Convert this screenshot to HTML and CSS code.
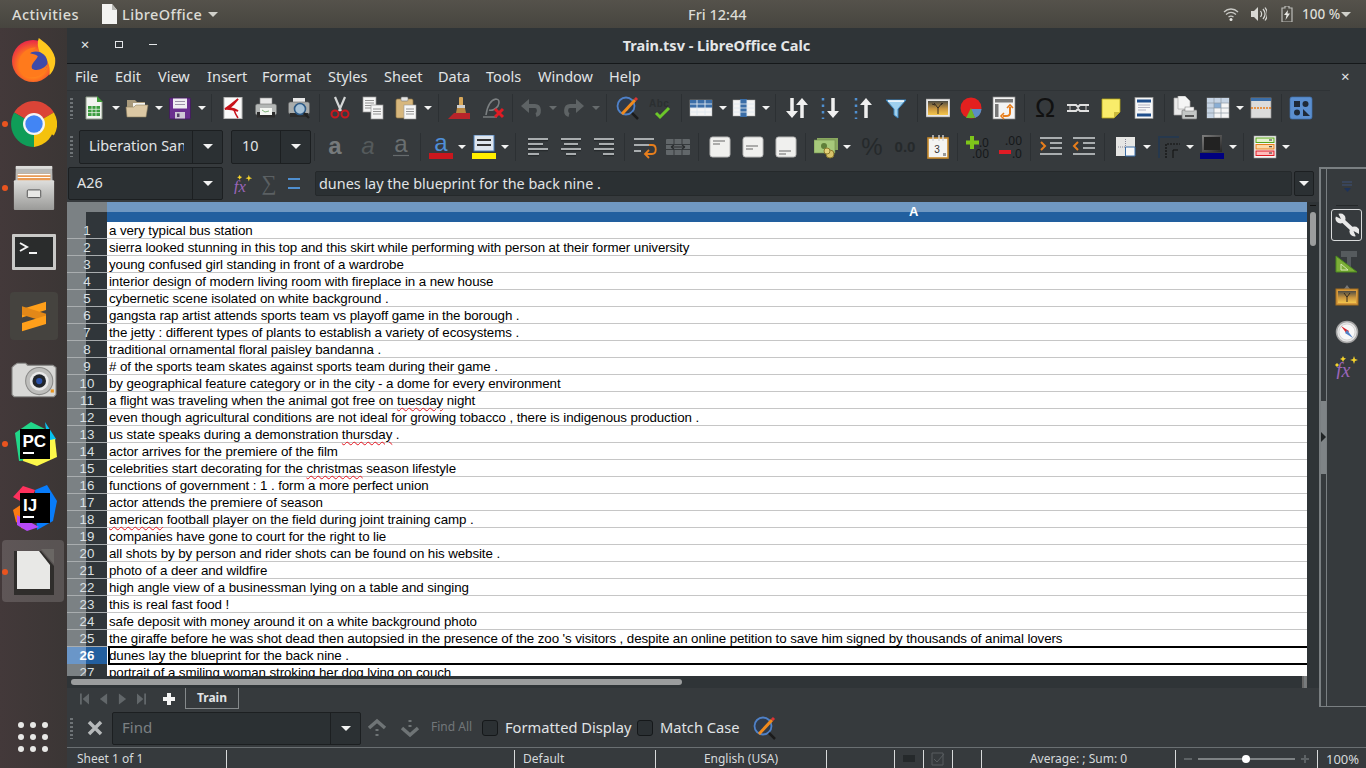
FILE: index.html
```html
<!DOCTYPE html>
<html lang="en">
<head>
<meta charset="utf-8">
<title>Train.tsv - LibreOffice Calc</title>
<link rel="stylesheet" href="styles.css">
</head>
<body>
<svg class="defs" aria-hidden="true">
  <symbol id="new" viewBox="0 0 24 24"><path d="M4 1h11l5 5v17H4z" fill="#f2f4f0" stroke="#8d9a88"/><path d="M15 0l6 6h-6z" fill="#3f9a3a"/><rect x="6" y="10" width="12" height="10" fill="#3b9c3f"/><path d="M6 13.3h12M6 16.6h12M10 10v10M14 10v10" stroke="#e8f4e6" stroke-width=".8"/></symbol>
  <symbol id="open" viewBox="0 0 24 24"><path d="M2 4h8l2 2h8v14H2z" fill="#a99a7c"/><rect x="8" y="7" width="12" height="6" fill="#f4f4f0"/><path d="M1 11h8l2-2h12l-2 12H2z" fill="#dcc8a4" stroke="#8f805f" stroke-width=".6"/></symbol>
  <symbol id="save" viewBox="0 0 24 24"><rect x="1.500" y="2" width="21" height="21" rx="1" fill="#6a2f8f" stroke="#43205c"/><rect x="5" y="2.500" width="14" height="10" fill="#f0eef2"/><path d="M7 5.500h10M7 8.500h10" stroke="#9c92a8"/><rect x="7" y="16" width="10" height="6.500" fill="#cfc8d6"/><rect x="9" y="17.500" width="2.500" height="3.500" fill="#55406a"/></symbol>
  <symbol id="pdf" viewBox="0 0 24 24"><rect x="3" y="1.500" width="18" height="21" fill="#fafafa" stroke="#b9b9b9"/><path d="M17 3C12 7 9 10 4 13c4-.500 8 .5 13 2-3-2-6-2.500-9-3 3-2 6-5 9-9z" fill="none" stroke="#c8121a" stroke-width="1.800"/><path d="M13 14c1 3 2 5 4 8" stroke="#c8121a" stroke-width="1.500" fill="none"/></symbol>
  <symbol id="print" viewBox="0 0 24 24"><rect x="6" y="2" width="12" height="7" fill="#e8e8e8" stroke="#888" stroke-width=".6"/><rect x="1.500" y="8" width="21" height="11" rx="2" fill="#b4b7b6" stroke="#6e7170" stroke-width=".6"/><rect x="3" y="16" width="18" height="5.500" fill="#2c2c2c"/><rect x="6" y="12" width="12" height="7" fill="#f4f6f2"/><path d="M8 14l3 2 4-1" stroke="#7fb27a" fill="none"/></symbol>
  <symbol id="preview" viewBox="0 0 24 24"><rect x="6" y="2" width="12" height="5" fill="#e8e8e8"/><rect x="1.500" y="6" width="21" height="12" rx="2" fill="#a9acab" stroke="#666" stroke-width=".6"/><rect x="3" y="17" width="18" height="4" fill="#2c2c2c"/><circle cx="13" cy="13" r="5.500" fill="#a8c3d8" stroke="#2d5a86" stroke-width="1.600"/><path d="M17 17l5 5" stroke="#222" stroke-width="2.200"/></symbol>
  <symbol id="cut" viewBox="0 0 24 24"><path d="M7 1l6 14M17 1l-6 14" stroke="#d4d6d6" stroke-width="2.200"/><circle cx="7" cy="18" r="3.500" fill="none" stroke="#c8181f" stroke-width="2"/><circle cx="17" cy="18" r="3.500" fill="none" stroke="#c8181f" stroke-width="2"/></symbol>
  <symbol id="copy" viewBox="0 0 24 24"><rect x="2" y="1" width="13" height="15" fill="#f5f5f5" stroke="#999" stroke-width=".7"/><path d="M4 4.500h9M4 7h9M4 9.500h9M4 12h6" stroke="#888" stroke-width=".9"/><rect x="10" y="9" width="12" height="14" fill="#f5f5f5" stroke="#999" stroke-width=".7"/><path d="M12 13h8M12 15.500h8M12 18h8" stroke="#888" stroke-width=".9"/></symbol>
  <symbol id="paste" viewBox="0 0 24 24"><rect x="2" y="3" width="17" height="19" rx="1.500" fill="#d7b77d" stroke="#8f7544" stroke-width=".7"/><rect x="7" y="1" width="7" height="4" rx="1" fill="#e4e4e4" stroke="#777" stroke-width=".6"/><rect x="10" y="9" width="12" height="14" fill="#f7f7f7" stroke="#999" stroke-width=".6"/><path d="M12 13h8M12 15.500h8M12 18h8" stroke="#888" stroke-width=".9"/></symbol>
  <symbol id="clone" viewBox="0 0 24 24"><rect x="11" y="1" width="4" height="9" rx="1" fill="#d8a85a"/><rect x="9" y="9" width="8" height="3" fill="#cfcfcf"/><path d="M9 12h8l1 5H8z" fill="#b8863f"/><path d="M0 23l6-6h16v6z" fill="#b8242a"/></symbol>
  <symbol id="clear" viewBox="0 0 24 24"><path d="M5 19C6 12 9 4 15 3c3 0 4 3 2 7-2 3-6 5-9 4" fill="none" stroke="#7c8082" stroke-width="1.600"/><path d="M2 21h14" stroke="#7c8082" stroke-width="1.400"/><path d="M14 13l8 8M22 13l-8 8" stroke="#e01b24" stroke-width="3"/></symbol>
  <symbol id="undo" viewBox="0 0 24 24"><path d="M5 10h11c5 0 5 8 1 9" fill="none" stroke="#5e6365" stroke-width="4"/><path d="M10 3L2 10l8 7z" fill="#5e6365"/></symbol>
  <symbol id="redo" viewBox="0 0 24 24"><path d="M19 10H8c-5 0-5 8-1 9" fill="none" stroke="#5e6365" stroke-width="4"/><path d="M14 3l8 7-8 7z" fill="#5e6365"/></symbol>
  <symbol id="spell" viewBox="0 0 24 24"><circle cx="10" cy="10" r="8.500" fill="#2f3a4a" stroke="#4f81c8" stroke-width="1.800"/><path d="M19 4L6 18" stroke="#f08a1c" stroke-width="3"/><path d="M19 4l2-2" stroke="#d33" stroke-width="3"/><path d="M16 17l6 6" stroke="#1b1b1b" stroke-width="2.500"/></symbol>
  <symbol id="auto" viewBox="0 0 24 24"><text x="0" y="11" class="ab">Abc</text><path d="M7 17l4 4 9-9" fill="none" stroke="#6cc62a" stroke-width="3"/></symbol>
  <symbol id="rows" viewBox="0 0 24 24"><rect x="1" y="4" width="22" height="16" fill="#f4f4f4" stroke="#aaa" stroke-width=".5"/><rect x="1" y="4" width="22" height="8" fill="#3b6ea8"/><path d="M1 8h22M1 12h22M1 16h22M8 4v16M16 4v16" stroke="#dfe6ee" stroke-width=".9"/></symbol>
  <symbol id="cols" viewBox="0 0 24 24"><rect x="1" y="4" width="22" height="16" fill="#f4f4f4" stroke="#aaa" stroke-width=".5"/><rect x="8" y="3" width="7" height="18" fill="#3b6ea8"/><path d="M1 8h22M1 12h22M1 16h22M8 4v16M15 4v16" stroke="#dfe6ee" stroke-width=".9"/></symbol>
  <symbol id="sort" viewBox="0 0 24 24"><path d="M7 2v15M17 22V7" stroke="#f0f0f0" stroke-width="3.500"/><path d="M1 15h12l-6 7zM11 9h12l-6-7z" fill="#f0f0f0"/></symbol>
  <symbol id="asc" viewBox="0 0 24 24"><path d="M15 2v15" stroke="#f0f0f0" stroke-width="3.500"/><path d="M9 15h12l-6 7z" fill="#f0f0f0"/><path d="M5 2v21" stroke="#4f8fd0" stroke-width="2.500" stroke-dasharray="2.500 4"/></symbol>
  <symbol id="desc" viewBox="0 0 24 24"><path d="M15 22V7" stroke="#f0f0f0" stroke-width="3.500"/><path d="M9 9h12l-6-7z" fill="#f0f0f0"/><path d="M5 2v21" stroke="#4f8fd0" stroke-width="2.500" stroke-dasharray="2.500 4"/></symbol>
  <symbol id="filter" viewBox="0 0 24 24"><path d="M2 4h20l-8 9v9l-4-3v-6z" fill="#9fd0ee" stroke="#3a85c0" stroke-width="1"/><path d="M4 5h16" stroke="#fff" stroke-width="1.500"/></symbol>
  <symbol id="image" viewBox="0 0 24 24"><defs><linearGradient id="sun" x1="0" y1="0" x2="0" y2="1"><stop offset="0" stop-color="#4b4a44"/><stop offset=".55" stop-color="#c8953f"/><stop offset="1" stop-color="#f4c64c"/></linearGradient></defs><rect x="0" y="3" width="24" height="18" fill="#e8e8e8" stroke="#888" stroke-width=".6"/><rect x="2" y="5" width="20" height="14" fill="url(#sun)"/><path d="M12 18v-6l-4-5M12 12l4-5M9 9l-3-1M15 9l2-2" stroke="#33291f" stroke-width="1" fill="none"/></symbol>
  <symbol id="chart" viewBox="0 0 24 24"><circle cx="12" cy="12" r="10.500" fill="#e3201f"/><path d="M12 13h10.500A10.500 10.500 0 0 1 16 22z" fill="#5b8cc4"/><path d="M12 12l-5 10h9z" fill="#6db62a"/></symbol>
  <symbol id="pivot" viewBox="0 0 24 24"><rect x="1" y="1" width="22" height="22" fill="#f4f4f4" stroke="#888" stroke-width=".7"/><rect x="3" y="3" width="18" height="3.500" fill="#777"/><rect x="3" y="8" width="3.500" height="13" fill="#777"/><path d="M18 11v6c0 2-2 3-4 3h-3" fill="none" stroke="#e87e1c" stroke-width="2"/><path d="M15 12l3-3 3 3M12 17l-3 3 3 3" fill="none" stroke="#e87e1c" stroke-width="1.600"/></symbol>
  <symbol id="omega" viewBox="0 0 24 24"><text x="12" y="21" class="om">Ω</text></symbol>
  <symbol id="link" viewBox="0 0 24 24"><path d="M1 9h9l2 2 2-2h9M1 15h9l2-2 2 2h9" fill="none" stroke="#e0e0e0" stroke-width="2"/><path d="M4 10v4M20 10v4" stroke="#999" stroke-width="1.500"/></symbol>
  <symbol id="note" viewBox="0 0 24 24"><path d="M3 3h18v13l-6 6H3z" fill="#f9ec6a" stroke="#b4a417" stroke-width=".8"/><path d="M15 22v-6h6z" fill="#cbbb3b"/></symbol>
  <symbol id="hdr" viewBox="0 0 24 24"><rect x="3" y="1.500" width="18" height="21" fill="#f7f7f7" stroke="#999" stroke-width=".7"/><rect x="5" y="3.500" width="14" height="3" fill="#1f4e8c"/><rect x="5" y="17.500" width="14" height="3" fill="#1f4e8c"/><path d="M6 9h12M6 11.500h12M6 14h8" stroke="#aab" stroke-width=".9"/></symbol>
  <symbol id="area" viewBox="0 0 24 24"><path d="M1 2h10l5 4v13H1z" fill="#eaeaea" stroke="#aaa" stroke-width=".7"/><path d="M5 0h7l5 5v8H5z" fill="#f4f4f4" stroke="#aaa" stroke-width=".7"/><rect x="9" y="14" width="15" height="9" rx="1" fill="#c4c7c6" stroke="#777" stroke-width=".7"/><rect x="12" y="11" width="9" height="4" fill="#f4f4f4" stroke="#777" stroke-width=".5"/><rect x="12" y="19" width="9" height="2" fill="#555"/></symbol>
  <symbol id="freeze" viewBox="0 0 24 24"><rect x="1" y="2" width="22" height="20" fill="#f5f5f5" stroke="#999" stroke-width=".6"/><rect x="1" y="2" width="22" height="5" fill="#c6d4e4"/><rect x="1" y="2" width="7" height="20" fill="#c6d4e4"/><rect x="8" y="7" width="7" height="5" fill="#8aaed4"/><path d="M1 7h22M1 12h22M1 17h22M8 2v20M15 2v20" stroke="#8d99a5" stroke-width=".7"/></symbol>
  <symbol id="split" viewBox="0 0 24 24"><rect x="2" y="2" width="20" height="20" fill="#dcdcdc" stroke="#999" stroke-width=".7"/><rect x="2" y="2" width="20" height="3" fill="#3b6ea8"/><path d="M2 12h20" stroke="#e87e1c" stroke-width="1.300" stroke-dasharray="2 1"/></symbol>
  <symbol id="nav" viewBox="0 0 24 24"><rect x="1" y="1" width="22" height="22" rx="2" fill="#5b8fd0" stroke="#3f70ad" stroke-width=".7"/><rect x="5" y="5" width="6" height="6" fill="#1f2a38"/><circle cx="16.500" cy="8" r="3" fill="#1f2a38"/><circle cx="8" cy="16.500" r="3" fill="#1f2a38"/><path d="M14 13v7h7z" fill="#1f2a38"/></symbol>

  <symbol id="abold" viewBox="0 0 24 24"><text x="12" y="19" class="fa fb">a</text></symbol>
  <symbol id="aital" viewBox="0 0 24 24"><text x="12" y="19" class="fa fit">a</text></symbol>
  <symbol id="aund" viewBox="0 0 24 24"><text x="12" y="17" class="fa">a</text><path d="M4 20.500h16" stroke="#666b6d" stroke-width="1.200"/></symbol>
  <symbol id="fcol" viewBox="0 0 24 24"><text x="12" y="16" class="fa fbl">a</text><rect x="0" y="18" width="24" height="6" fill="#c9171e"/></symbol>
  <symbol id="hl" viewBox="0 0 24 24"><rect x="2" y="0" width="20" height="16" fill="#dfe6ee" stroke="#4a7fbc"/><path d="M5 5h14M5 10h14" stroke="#333" stroke-width="2.200"/><rect x="0" y="18" width="24" height="6" fill="#ffee00"/></symbol>
  <symbol id="al" viewBox="0 0 24 24"><path d="M2 4h20M2 9h15M2 14h20M2 19h11" stroke="#a9adaf" stroke-width="2"/><path d="M2 5h20M2 10h15M2 15h20M2 20h11" stroke="#1d2022" stroke-width=".7" transform="translate(0 .700)"/></symbol>
  <symbol id="ac" viewBox="0 0 24 24"><path d="M2 4h20M5 9h14M2 14h20M7 19h10" stroke="#a9adaf" stroke-width="2"/><path d="M2 5h20M5 10h14M2 15h20M7 20h10" stroke="#1d2022" stroke-width=".7" transform="translate(0 .700)"/></symbol>
  <symbol id="ar" viewBox="0 0 24 24"><path d="M2 4h20M7 9h15M2 14h20M11 19h11" stroke="#a9adaf" stroke-width="2"/><path d="M2 5h20M7 10h15M2 15h20M11 20h11" stroke="#1d2022" stroke-width=".7" transform="translate(0 .700)"/></symbol>
  <symbol id="wrap" viewBox="0 0 24 24"><path d="M1 4h20M1 10h15M1 16h7" stroke="#a9adaf" stroke-width="2"/><path d="M16 10h3c5 0 5 9 0 9h-6" fill="none" stroke="#e87e1c" stroke-width="1.800"/><path d="M16 15l-4 4 4 4" fill="none" stroke="#e87e1c" stroke-width="1.800"/></symbol>
  <symbol id="merge" viewBox="0 0 24 24"><rect x="0" y="4" width="24" height="16" rx="1" fill="#62676a"/><path d="M0 9.500h24M0 14.500h24M8 4v5M16 4v5M8 15v5M16 15v5" stroke="#363a3d"/><path d="M5 12h14M5 12l3-2M5 12l3 2M19 12l-3-2M19 12l-3 2" stroke="#2a2d2f" stroke-width="1.200"/></symbol>
  <symbol id="vt" viewBox="0 0 24 24"><rect x="2" y="2" width="20" height="20" rx="2.500" fill="#f0f0ee" stroke="#b8b8b8"/><path d="M5 6h12M5 9h7" stroke="#666" stroke-width="1.200"/></symbol>
  <symbol id="vm" viewBox="0 0 24 24"><rect x="2" y="2" width="20" height="20" rx="2.500" fill="#f0f0ee" stroke="#b8b8b8"/><path d="M5 11h12M5 14h7" stroke="#666" stroke-width="1.200"/></symbol>
  <symbol id="vb" viewBox="0 0 24 24"><rect x="2" y="2" width="20" height="20" rx="2.500" fill="#f0f0ee" stroke="#b8b8b8"/><path d="M5 16h12M5 19h7" stroke="#666" stroke-width="1.200"/></symbol>
  <symbol id="cash" viewBox="0 0 24 24"><rect x="3" y="3" width="21" height="12" fill="#8aa860"/><rect x="0" y="5" width="21" height="13" fill="#a7c97b" stroke="#6e8a4a" stroke-width=".6"/><circle cx="10" cy="11" r="3" fill="#5f7f3a"/><circle cx="16" cy="19" r="4" fill="#d8c36a" stroke="#8c7a2e"/><circle cx="13" cy="16" r="3" fill="#e5d27a" stroke="#8c7a2e"/></symbol>
  <symbol id="pct" viewBox="0 0 24 24"><text x="12" y="20" class="pc">%</text></symbol>
  <symbol id="dec" viewBox="0 0 24 24"><text x="12" y="17" class="pc2">0.0</text></symbol>
  <symbol id="date" viewBox="0 0 24 24"><rect x="2" y="3" width="20" height="20" fill="#f4f4f2" stroke="#c78a2c" stroke-width="1.600"/><path d="M7 0v6M13 0v6M17 0v6" stroke="#d8d8d8" stroke-width="1.400"/><text x="11" y="18" class="cal">3</text><rect x="17" y="18" width="3" height="3" fill="#999"/></symbol>
  <symbol id="adddec" viewBox="0 0 24 24"><path d="M7 1v13M1 7.500h13" stroke="#7ec51a" stroke-width="4"/><text x="24" y="12" class="nm">.0</text><text x="24" y="23" class="nm">.00</text></symbol>
  <symbol id="remdec" viewBox="0 0 24 24"><rect x="1" y="15" width="12" height="4" fill="#e01b24"/><text x="24" y="10" class="nm">.00</text><text x="24" y="23" class="nm">.0</text></symbol>
  <symbol id="ind" viewBox="0 0 24 24"><path d="M1 3h22M11 8h12M11 13h12M1 19h22" stroke="#a9adaf" stroke-width="1.800"/><path d="M2 7l4 4-4 4" fill="none" stroke="#e87e1c" stroke-width="2"/></symbol>
  <symbol id="outd" viewBox="0 0 24 24"><path d="M1 3h22M11 8h12M11 13h12M1 19h22" stroke="#a9adaf" stroke-width="1.800"/><path d="M6 7l-4 4 4 4" fill="none" stroke="#e87e1c" stroke-width="2"/></symbol>
  <symbol id="bord" viewBox="0 0 24 24"><rect x="2" y="2" width="19" height="19" fill="#e6e6e4"/><path d="M11.500 12H21v9h-9.500z" fill="#f8f8f8" stroke="#3b6ea8" stroke-width="1"/><path d="M11.500 4v8M4 12h8" stroke="#889" stroke-dasharray="1 1"/></symbol>
  <symbol id="bstyle" viewBox="0 0 24 24"><path d="M2 23V2h20" fill="none" stroke="#26384d" stroke-width="2"/><path d="M9 23V9h14" fill="none" stroke="#111" stroke-width="1.200" stroke-dasharray="2 1"/><path d="M16 23v-8h5" fill="none" stroke="#111" stroke-width="1"/></symbol>
  <symbol id="bcol" viewBox="0 0 24 24"><defs><linearGradient id="bc" x1="0" y1="0" x2="1" y2="1"><stop offset="0" stop-color="#7a7a7a"/><stop offset="1" stop-color="#2a2a2a"/></linearGradient></defs><rect x="3" y="1" width="18" height="15" fill="#222" stroke="url(#bc)" stroke-width="2"/><rect x="0" y="18" width="24" height="6" fill="#00007f"/></symbol>
  <symbol id="cond" viewBox="0 0 24 24"><rect x="1" y="1" width="22" height="22" fill="#f6f6f6" stroke="#999" stroke-width=".6"/><rect x="3" y="3" width="18" height="4.500" fill="#e4f2cf" stroke="#5aa51c"/><rect x="3" y="9.500" width="18" height="4.500" fill="#fbd9a8" stroke="#e87e1c"/><rect x="3" y="16" width="18" height="4.500" fill="#fbb" stroke="#e01b24"/><path d="M16 5h3M16 11.700h3M16 18h3" stroke="#333"/></symbol>

  <symbol id="wrench" viewBox="0 0 24 24"><path d="M6 6l13 12" stroke="#e8e8e8" stroke-width="4"/><circle cx="5.500" cy="5.500" r="5" fill="#e8e8e8"/><circle cx="19.500" cy="18.500" r="5" fill="#e8e8e8"/><path d="M6 6L3 0h-3v3zM18.500 18L21 24h3v-3z" fill="#363a3d"/></symbol>
  <symbol id="styl" viewBox="0 0 24 24"><path d="M6 1h16v6H16v12h-4V7H6z" fill="#565b5e"/><path d="M1 6l21 16H1z" fill="#7dae38" stroke="#4a8a1c"/><path d="M6 14l7 6H6z" fill="none" stroke="#d4e6b0"/></symbol>
  <symbol id="gal" viewBox="0 0 24 24"><path d="M12 0l3 4H9z" fill="#777"/><rect x="1" y="4" width="22" height="16" fill="#d69a3e" stroke="#a66f1d"/><rect x="3" y="6" width="18" height="12" fill="url(#sun)"/><path d="M12 17v-5l-3-4M12 12l3-4" stroke="#33291f" fill="none"/></symbol>
  <symbol id="comp" viewBox="0 0 24 24"><circle cx="12" cy="12" r="10.500" fill="#e4e4e4" stroke="#a4a4a4" stroke-width="1.500"/><circle cx="12" cy="12" r="8" fill="#f8f8f8" stroke="#bbb" stroke-width=".5"/><path d="M6 6l8 5-2 3z" fill="#d8272e"/><path d="M18 18l-8-5 2-3z" fill="#4f81c8"/></symbol>
  <symbol id="fx" viewBox="0 0 24 24"><text x="1" y="22" class="fxt">fx</text><path d="M8 1l1 2 2 .500-2 1.500-1 2-1-2-2-1 2-1zM19 1l1 3 3 1-3 1-1 3-1-3-3-1 3-1zM2 8l1 1 1 1-1 1-1 1-1-1-1-1 1-1z" fill="#f4d22c"/></symbol>
  <symbol id="sfx" viewBox="0 0 24 24"><text x="1" y="22" class="fxt">fx</text><path d="M8 1l1 2 2 .500-2 1.500-1 2-1-2-2-1 2-1zM19 1l1 3 3 1-3 1-1 3-1-3-3-1 3-1z" fill="#f4d22c"/></symbol>
</svg>

<header class="topbar">
  <span class="activities">Activities</span>
  <span class="appmenu">
    <svg class="tdoc" viewBox="0 0 17 20"><path d="M1 0h10l5 6v14H1z" fill="#f3f3f1"/><path d="M11 0l5 6h-5z" fill="#b7b7b3"/></svg>
    <span class="appname">LibreOffice</span><i class="caret"></i>
  </span>
  <span class="clock">Fri 12:44</span>
  <span class="tray">
    <svg class="wifi" viewBox="0 0 16 14"><path d="M1 5c4-4 10-4 14 0M3 7.500c3-2.500 7-2.500 10 0M5.500 10c1.500-1 3.500-1 5 0" fill="none" stroke="#c9c9c5" stroke-width="1.300"/><circle cx="8" cy="12.500" r="1.500" fill="#e6e6e2"/></svg>
    <svg class="vol" viewBox="0 0 16 14"><path d="M0 4h3l4-4v14l-4-4H0z" fill="#d8d8d4"/><path d="M9.500 4c1.500 2 1.500 4 0 6M12 2c2.500 3 2.500 7 0 10M14 .5c3 4 3 9 0 13" fill="none" stroke="#d8d8d4" stroke-width="1.200"/></svg>
    <svg class="batt" viewBox="0 0 12 16"><path d="M4 0h4v2h3v14H1V2h3z" fill="none" stroke="#bdbdb9" stroke-width="1.200"/><path d="M7 4L3 9h2.500L4.500 14 9 7.500H6.500z" fill="#e6e6e2"/></svg>
    <span class="pct">100 %</span><i class="caret"></i>
  </span>
</header>

<div class="desktop">
  <nav class="dock">
    <div class="dk"><svg class="dki" viewBox="0 0 48 48"><defs><radialGradient id="ffx" cx=".5" cy=".6" r=".6"><stop offset="0" stop-color="#ffd23c"/><stop offset=".55" stop-color="#ff7a1c"/><stop offset="1" stop-color="#e8264a"/></radialGradient></defs><circle cx="23" cy="25" r="22" fill="url(#ffx)"/><path d="M29 1c5 4 14 9 17 21 1 8-2 14-6 18 2-10-3-19-10-24-2-5-3-10-1-15z" fill="#ffc81e"/><circle cx="26" cy="27" r="12" fill="#3f4aa8"/><path d="M10 20c4-6 10-10 16-9-2 3-6 3-6 6 2 1 6 1 8 3-2 5-8 8-6 13 4 3 12 1 16-5-1 9-8 15-17 14C11 42 5 31 10 20z" fill="#ff7a1c"/></svg></div>
    <div class="dk run"><svg class="dki" viewBox="0 0 44 44"><path d="M22 22L3 11a22 22 0 0 1 38 0z" fill="#db4437"/><path d="M22 22L3 11a22 22 0 0 0 19 33z" fill="#0f9d58"/><path d="M22 22h19.500A22 22 0 0 1 22 44z" fill="#f4c20d"/><path d="M22 22L41 11a22 22 0 0 1 0 22z" fill="#f4c20d"/><circle cx="22" cy="22" r="10.500" fill="#f5f5f5"/><circle cx="22" cy="22" r="8.300" fill="#4285f4"/></svg></div>
    <div class="dk run"><svg class="dki" viewBox="0 0 44 48"><defs><linearGradient id="drw" x1="0" y1="0" x2="0" y2="1"><stop offset="0" stop-color="#dededc"/><stop offset="1" stop-color="#9a9a98"/></linearGradient></defs><path d="M3 2h38l1 44H2z" fill="#b9b9b7"/><rect x="3" y="1" width="38" height="3" fill="#dcdcda"/><path d="M5 9h34v8H5z" fill="#e99a55"/><path d="M5 10h34M5 13h34" stroke="#fff" stroke-width="1.200"/><rect x="1" y="16" width="42" height="31" rx="1" fill="url(#drw)"/><rect x="15" y="26" width="14" height="8" rx="1" fill="#e8e8e6" stroke="#505050"/></svg></div>
    <div class="dk"><svg class="dki" viewBox="0 0 46 38"><rect x="1" y="1" width="44" height="36" rx="1" fill="#c9c9c7"/><rect x="4" y="4" width="38" height="30" fill="#2a2c2c"/><path d="M9 10l7 4-7 4" fill="none" stroke="#f4f4f4" stroke-width="2"/><path d="M18 20h8" stroke="#f4f4f4" stroke-width="2"/></svg></div>
    <div class="dk"><div class="subl"><svg class="sub" viewBox="0 0 26 32"><path d="M26 0v9L0 17V8z" fill="#ff9f1a"/><path d="M0 14l26 8V13L0 5z" fill="#e38818"/><path d="M26 15v9L0 32v-9z" fill="#ff9f1a"/></svg></div></div>
    <div class="dk"><svg class="dki" viewBox="0 0 44 34"><path d="M3 3l3-2h8l2 2h24l3 2v26l-2 2H3l-2-2V5z" fill="#d8d8d6" stroke="#8c8c8a"/><circle cx="27" cy="18" r="13" fill="#bdbdbb" stroke="#8a8a88"/><circle cx="27" cy="18" r="9" fill="#eaeaea"/><circle cx="27" cy="18" r="6.500" fill="#22262c"/><circle cx="27" cy="18" r="3" fill="#2a50a8"/><rect x="38" y="26" width="3" height="3" fill="#e8941c"/></svg></div>
    <div class="dk run"><svg class="dki" viewBox="0 0 46 46"><path d="M4 12L20 1l14 7-8 30-18 2z" fill="#21d789"/><path d="M34 1l11 17-8 6z" fill="#07c3f2"/><path d="M14 24l30-6 2 18-20 9-14-5z" fill="#fcf84a"/><rect x="9" y="8" width="30" height="30" fill="#000"/><text x="11.500" y="26" class="jb">PC</text><rect x="12" y="31" width="11" height="2" fill="#fff"/></svg></div>
    <div class="dk"><svg class="dki" viewBox="0 0 46 46"><path d="M2 12L12 1l12 4-6 16z" fill="#fe315d"/><path d="M24 5L36 0l10 16-4 20-16 9z" fill="#087cfa"/><path d="M2 25l9-6-1 24 8 2-13-8z" fill="#f97a12"/><path d="M6 30l22 12-12 4-10-6z" fill="#b74af7"/><rect x="9" y="8" width="30" height="30" fill="#000"/><text x="12" y="26" class="jb">IJ</text><rect x="12" y="31" width="11" height="2" fill="#fff"/></svg></div>
    <div class="dk run active"><svg class="dki lo" viewBox="0 0 40 46"><path d="M0 2h27l13 15v29H0z" fill="#2f2d2b"/><path d="M3 2h22l11 14v24H3z" fill="#e8e8e6"/><path d="M27 0h13v15z" fill="#6a6764"/></svg></div>
    <div class="apps"><i></i><i></i><i></i><i></i><i></i><i></i><i></i><i></i><i></i></div>
  </nav>

  <main class="win">
    <div class="title">
      <span class="wb">×</span><span class="wb"><i class="sq"></i></span><span class="wb"><i class="mn"></i></span>
      <span class="ttext">Train.tsv - LibreOffice Calc</span>
    </div>
    <div class="menu">
      <span>File</span><span>Edit</span><span>View</span><span>Insert</span><span>Format</span><span>Styles</span><span>Sheet</span><span>Data</span><span>Tools</span><span>Window</span><span>Help</span>
      <b class="mclose">×</b>
    </div>

    <div class="tb tb1">
      <i class="grip"></i>
      <span class="t"><svg><use href="#new"/></svg></span><i class="d"></i>
      <span class="t"><svg><use href="#open"/></svg></span><i class="d"></i>
      <span class="t"><svg><use href="#save"/></svg></span><i class="d"></i><i class="sp s10"></i>
      <span class="t"><svg><use href="#pdf"/></svg></span>
      <span class="t"><svg><use href="#print"/></svg></span>
      <span class="t"><svg><use href="#preview"/></svg></span><i class="sp s8"></i>
      <span class="t"><svg><use href="#cut"/></svg></span>
      <span class="t"><svg><use href="#copy"/></svg></span>
      <span class="t"><svg><use href="#paste"/></svg></span><i class="d"></i><i class="sp s11"></i>
      <span class="t"><svg><use href="#clone"/></svg></span>
      <span class="t"><svg><use href="#clear"/></svg></span><i class="sp s5"></i>
      <span class="t"><svg><use href="#undo"/></svg></span><i class="d off"></i>
      <span class="t"><svg><use href="#redo"/></svg></span><i class="d off"></i><i class="sp s11"></i>
      <span class="t"><svg><use href="#spell"/></svg></span>
      <span class="t"><svg><use href="#auto"/></svg></span><i class="sp s7"></i>
      <span class="t"><svg><use href="#rows"/></svg></span><i class="d"></i>
      <span class="t"><svg><use href="#cols"/></svg></span><i class="d"></i><i class="sp s10"></i>
      <span class="t"><svg><use href="#sort"/></svg></span>
      <span class="t"><svg><use href="#asc"/></svg></span>
      <span class="t"><svg><use href="#desc"/></svg></span>
      <span class="t"><svg><use href="#filter"/></svg></span><i class="sp s9"></i>
      <span class="t"><svg><use href="#image"/></svg></span>
      <span class="t"><svg><use href="#chart"/></svg></span>
      <span class="t"><svg><use href="#pivot"/></svg></span><i class="sp s8"></i>
      <span class="t"><svg><use href="#omega"/></svg></span>
      <span class="t"><svg><use href="#link"/></svg></span>
      <span class="t"><svg><use href="#note"/></svg></span>
      <span class="t"><svg><use href="#hdr"/></svg></span><i class="sp s8"></i>
      <span class="t"><svg><use href="#area"/></svg></span>
      <span class="t"><svg><use href="#freeze"/></svg></span><i class="d"></i>
      <span class="t"><svg><use href="#split"/></svg></span><i class="sp s7"></i>
      <span class="t"><svg><use href="#nav"/></svg></span>
    </div>

    <div class="tb tb2">
      <i class="grip"></i>
      <div class="combo fontbox"><span class="cv">Liberation Sans</span><span class="cb"><i class="d"></i></span></div>
      <div class="combo sizebox"><span class="cv">10</span><span class="cb"><i class="d"></i></span></div>
      <i class="sp s7"></i>
      <span class="t"><svg><use href="#abold"/></svg></span>
      <span class="t"><svg><use href="#aital"/></svg></span>
      <span class="t"><svg><use href="#aund"/></svg></span><i class="sp s7"></i>
      <span class="t"><svg><use href="#fcol"/></svg></span><i class="d"></i>
      <span class="t"><svg><use href="#hl"/></svg></span><i class="d"></i><i class="sp s11"></i>
      <span class="t"><svg><use href="#al"/></svg></span>
      <span class="t"><svg><use href="#ac"/></svg></span>
      <span class="t"><svg><use href="#ar"/></svg></span><i class="sp s8"></i>
      <span class="t"><svg><use href="#wrap"/></svg></span>
      <span class="t"><svg><use href="#merge"/></svg></span><i class="sp s9"></i>
      <span class="t"><svg><use href="#vt"/></svg></span>
      <span class="t"><svg><use href="#vm"/></svg></span>
      <span class="t"><svg><use href="#vb"/></svg></span><i class="sp s7"></i>
      <span class="t"><svg><use href="#cash"/></svg></span><i class="d"></i><i class="gap3"></i>
      <span class="t"><svg><use href="#pct"/></svg></span>
      <span class="t"><svg><use href="#dec"/></svg></span>
      <span class="t"><svg><use href="#date"/></svg></span><i class="sp s6"></i>
      <span class="t"><svg><use href="#adddec"/></svg></span>
      <span class="t"><svg><use href="#remdec"/></svg></span><i class="sp s8"></i>
      <span class="t"><svg><use href="#ind"/></svg></span>
      <span class="t"><svg><use href="#outd"/></svg></span><i class="sp s9"></i>
      <span class="t"><svg><use href="#bord"/></svg></span><i class="d"></i>
      <span class="t"><svg><use href="#bstyle"/></svg></span><i class="d"></i>
      <span class="t"><svg><use href="#bcol"/></svg></span><i class="d"></i><i class="sp s10"></i>
      <span class="t"><svg><use href="#cond"/></svg></span><i class="d"></i>
    </div>

    <div class="work">
      <div class="sheetcol">
        <div class="fbar">
          <div class="combo namebox"><span class="cv">A26</span><span class="cb"><i class="d"></i></span></div>
          <span class="fi fi1"><svg><use href="#sfx"/></svg></span>
          <span class="fi sigma">∑</span>
          <span class="fi eq"></span>
          <div class="finput">dunes lay the blueprint for the back nine .</div>
          <span class="fdrop"><i class="d"></i></span>
        </div>
        <div class="gridwrap">
          <div class="grid">
            <div class="hdr"><div class="corner"></div><div class="colA">A</div></div>
            <div class="row"><b>1</b><p>a very typical bus station</p></div>
            <div class="row"><b>2</b><p>sierra looked stunning in this top and this skirt while performing with person at their former university</p></div>
            <div class="row"><b>3</b><p>young confused girl standing in front of a wardrobe</p></div>
            <div class="row"><b>4</b><p>interior design of modern living room with fireplace in a new house</p></div>
            <div class="row"><b>5</b><p>cybernetic scene isolated on white background .</p></div>
            <div class="row"><b>6</b><p>gangsta rap artist attends sports team vs playoff game in the borough .</p></div>
            <div class="row"><b>7</b><p>the jetty : different types of plants to establish a variety of ecosystems .</p></div>
            <div class="row"><b>8</b><p>traditional ornamental floral paisley bandanna .</p></div>
            <div class="row"><b>9</b><p># of the sports team skates against sports team during their game .</p></div>
            <div class="row"><b>10</b><p>by geographical feature category or in the city - a dome for every environment</p></div>
            <div class="row"><b>11</b><p>a flight was traveling when the animal got free on <u>tuesday</u> night</p></div>
            <div class="row"><b>12</b><p>even though agricultural conditions are not ideal for growing tobacco , there is indigenous production .</p></div>
            <div class="row"><b>13</b><p>us state speaks during a demonstration <u>thursday</u> .</p></div>
            <div class="row"><b>14</b><p>actor arrives for the premiere of the film</p></div>
            <div class="row"><b>15</b><p>celebrities start decorating for the <u>christmas</u> season lifestyle</p></div>
            <div class="row"><b>16</b><p>functions of government : 1 . form a more perfect union</p></div>
            <div class="row"><b>17</b><p>actor attends the premiere of season</p></div>
            <div class="row"><b>18</b><p><u>american</u> football player on the field during joint training camp .</p></div>
            <div class="row"><b>19</b><p>companies have gone to court for the right to lie</p></div>
            <div class="row"><b>20</b><p>all shots by by person and rider shots can be found on his website .</p></div>
            <div class="row"><b>21</b><p>photo of a deer and wildfire</p></div>
            <div class="row"><b>22</b><p>high angle view of a businessman lying on a table and singing</p></div>
            <div class="row"><b>23</b><p>this is real fast food !</p></div>
            <div class="row"><b>24</b><p>safe deposit with money around it on a white background photo</p></div>
            <div class="row"><b>25</b><p>the giraffe before he was shot dead then autopsied in the presence of the zoo 's visitors , despite an online petition to save him signed by thousands of animal lovers</p></div>
            <div class="row cur"><b>26</b><p>dunes lay the blueprint for the back nine .</p></div>
            <div class="row"><b>27</b><p>portrait of a smiling woman stroking her dog lying on couch</p></div>
          </div>
          <div class="vscroll"><i class="vbtn"></i><i class="vthumb"></i></div>
        </div>
        <div class="hscroll"><i class="hthumb"></i><i class="hbtn"></i></div>
        <div class="tabs">
          <svg class="nv" viewBox="0 0 10 12"><path d="M0 0h2v12H0zM10 0v12L3 6z"/></svg>
          <svg class="nv" viewBox="0 0 10 12"><path d="M9 0v12L1 6z"/></svg>
          <svg class="nv" viewBox="0 0 10 12"><path d="M1 0v12l8-6z"/></svg>
          <svg class="nv" viewBox="0 0 10 12"><path d="M8 0h2v12H8zM0 0v12l7-6z"/></svg>
          <svg class="plus" viewBox="0 0 12 12"><path d="M4 0h4v4h4v4H8v4H4V8H0V4h4z"/></svg>
          <span class="tab">Train</span>
        </div>
      </div>
      <aside class="side">
        <div class="strip"><i class="hand"></i></div>
        <div class="deck">
          <svg class="sett" viewBox="0 0 14 12"><path d="M2 1h10M2 4h10" stroke="#3b4a66" stroke-width="1.300"/><path d="M4 7h7l-3.500 4z" fill="#1f3358"/></svg>
          <i class="dline"></i>
          <span class="di on"><svg><use href="#wrench"/></svg></span>
          <span class="di"><svg><use href="#styl"/></svg></span>
          <span class="di"><svg><use href="#gal"/></svg></span>
          <span class="di"><svg><use href="#comp"/></svg></span>
          <span class="di"><svg><use href="#fx"/></svg></span>
        </div>
      </aside>
    </div>

    <div class="find">
      <i class="grip"></i>
      <svg class="fx" viewBox="0 0 16 16"><path d="M2 2l12 12M14 2L2 14" stroke="#b6b9ba" stroke-width="3.500"/></svg>
      <div class="combo findbox"><span class="cv ph">Find</span><span class="cb"><i class="d"></i></span></div>
      <svg class="farrow" viewBox="0 0 20 20"><path d="M2 10l8-7 8 7" fill="none" stroke="#6f7476" stroke-width="3.500"/><path d="M10 11v2M10 16v2" stroke="#6f7476" stroke-width="3"/></svg>
      <svg class="farrow" viewBox="0 0 20 20"><path d="M2 10l8 7 8-7" fill="none" stroke="#6f7476" stroke-width="3.500"/><path d="M10 2v2M10 7v2" stroke="#6f7476" stroke-width="3"/></svg>
      <span class="fall">Find All</span>
      <i class="chk"></i><span class="lbl l1">Formatted Display</span>
      <i class="chk"></i><span class="lbl l2">Match Case</span>
      <span class="t spell"><svg><use href="#spell"/></svg></span>
    </div>

    <footer class="status">
      <span class="st c1">Sheet 1 of 1</span>
      <span class="st c2"></span>
      <span class="st c3">Default</span>
      <span class="st c4">English (USA)</span>
      <span class="st c5"></span>
      <span class="st c6"><i class="ins"></i></span>
      <span class="st c7"><svg class="sig" viewBox="0 0 14 14"><path d="M1 1h11v12H1z" fill="none" stroke="#585d60"/><path d="M3 7l3 3 7-8" fill="none" stroke="#585d60"/></svg></span>
      <span class="st c8"></span>
      <span class="st c9">Average: ; Sum: 0</span>
      <span class="st c10"><i class="zm"></i><i class="track"><i class="knob"></i></i><i class="zp"></i></span>
      <span class="st c11">100%</span>
    </footer>
  </main>
</div>
</body>
</html>
```

FILE: styles.css
```css
*{box-sizing:border-box}
html,body{margin:0;padding:0;width:1366px;height:768px;overflow:hidden}
body{font-family:"Noto Sans",sans-serif;background:#3d3735;color:#dfe3e5;display:flex;flex-direction:column}
i{display:block;font-style:normal}
.defs{position:absolute;width:0;height:0}

.topbar{height:28px;flex:none;display:flex;align-items:center;background:linear-gradient(#55524b,#47453f);color:#dcdcd6;font-size:14.500px;font-weight:500;white-space:nowrap}
.activities{width:89px;padding-left:12px;letter-spacing:.45px}
.appmenu{display:flex;align-items:center;width:599px;padding-left:12px}
.tdoc{width:17px;height:20px;margin-right:4px;flex:none}
.appname{width:86px;letter-spacing:.4px}
.caret{width:0;height:0;flex:none;border-left:5px solid transparent;border-right:5px solid transparent;border-top:5px solid #d0d0ca}
.clock{width:535px}
.tray{display:flex;align-items:center;flex:1}
.wifi{width:16px;height:14px;margin-right:12px;flex:none}
.vol{width:16px;height:14px;margin-right:14px;flex:none}
.batt{width:12px;height:16px;margin-right:9px;flex:none}
.pct{width:39px;font-size:13.500px}

.desktop{flex:1;display:flex;min-height:0}
.dock{width:67px;flex:none;display:flex;flex-direction:column;background:linear-gradient(90deg,#43393a,#3b3635)}
.dk{height:64px;flex:none;display:flex;align-items:center;justify-content:center;position:relative}
.dki{width:46px;height:46px}
.run::before{content:"";position:absolute;left:2px;top:29px;width:6px;height:6px;border-radius:50%;background:#e9541f;z-index:2}
.active::after{content:"";position:absolute;left:2px;top:0;width:62px;height:62px;border-radius:4px;background:rgba(255,255,255,.15)}
.lo{position:relative;z-index:1}
.subl{width:48px;height:48px;background:#45433f;border-radius:4px;display:flex;align-items:center;justify-content:center}
.sub{width:24px;height:31px}
.apps{margin-top:auto;margin-bottom:16px;margin-left:18px;width:30px;display:grid;grid-template-columns:repeat(3,6px);gap:6px}
.apps i{width:6px;height:6px;border-radius:50%;background:#e8e8e6}

.win{flex:1;min-width:0;display:flex;flex-direction:column;background:#363a3d}
.title{height:36px;flex:none;background:#2f3437;border-bottom:1px solid #15181a;display:flex;align-items:center;padding-bottom:2px;position:relative}
.wb{width:34px;display:flex;justify-content:center;color:#e4e6e8;font-size:15px;line-height:1}
.wb:first-child{margin-left:1px}
.sq{width:8px;height:7px;border:1.500px solid #e4e6e8}
.mn{width:8px;height:1px;background:#e4e6e8}
.ttext{position:absolute;left:0;right:0;text-align:center;font-weight:700;font-size:14.500px;color:#e4e6e8}
.menu{height:27px;flex:none;display:grid;grid-template-columns:40px 43px 49px 55px 66px 56px 54px 48px 52px 71px 40px 1fr;align-items:center;padding:0 0 2px 8px;font-size:14.500px;color:#e1e4e6;border-bottom:1px solid #2f3336;margin-right:36px}
.menu span{white-space:nowrap}
.mclose{position:absolute;left:1341px;top:66px;font-weight:400;font-size:15px;color:#e4e6e8}

.tb{flex:none;display:flex;align-items:center}
.tb1{height:36px;padding-bottom:2px}
.tb2{height:39px}
.grip{width:3px;height:21px;margin:0 4.500px 0 3px;flex:none;background:repeating-linear-gradient(#6e7376 0 2px,transparent 2px 4px)}
.t{width:33px;flex:none;display:flex;align-items:center;justify-content:center}
.t svg{width:24px;height:24px;display:block;overflow:visible}
.d{width:10px;flex:none;height:4px;position:relative}
.d::before{content:"";position:absolute;left:1px;top:0;border-left:4px solid transparent;border-right:4px solid transparent;border-top:4px solid #f2f2f2}
.d.off::before{border-top-color:#666b6d}
.sp{flex:none;display:flex;justify-content:center}
.sp::after{content:"";width:1px;height:28px;background:#2c3033}
.s5{width:5px}.s6{width:6px}.s7{width:7px}.s8{width:8px}.s9{width:9px}.s10{width:10px}.s11{width:11px}
.gap3{width:3px;flex:none}

.ab{font:700 10px "Liberation Sans",sans-serif;fill:#2b2f31;letter-spacing:.5px}
.om{font:400 27px "Liberation Sans",sans-serif;fill:#111;text-anchor:middle}
.fa{font:400 24px "Liberation Sans",sans-serif;fill:#6a6f71;text-anchor:middle}
.fb{font-weight:700;fill:#767a7c}
.fit{font-style:italic;fill:#555a5c}
.fbl{fill:#4f8fd8}
.pc{font:400 24px "Liberation Sans",sans-serif;fill:#25292b;text-anchor:middle}
.pc2{font:700 15px "Liberation Sans",sans-serif;fill:#25292b;text-anchor:middle}
.cal{font:400 10px "Liberation Sans",sans-serif;fill:#333;text-anchor:middle}
.nm{font:400 12px "Noto Sans",sans-serif;fill:#15181a;text-anchor:end}
.jb{font:700 17px "Liberation Sans",sans-serif;fill:#fff}
.fxt{font:italic 400 20px "Liberation Serif",serif;fill:#9a65b8}

.combo{display:flex;flex:none;background:#2b3033;border:1px solid #1c1f21;border-radius:2px;color:#e1e4e6}
.cv{flex:1;min-width:0;overflow:hidden;white-space:nowrap;font-size:14.400px;display:flex;align-items:center;padding-bottom:2px}
.cb{flex:none;border-left:1px solid #1c1f21;display:flex;align-items:center;justify-content:center;width:30px}
.cb .d,.fdrop .d{width:10px;height:5px}
.cb .d::before,.fdrop .d::before{left:0;border-left-width:5px;border-right-width:5px;border-top-width:5px}
.fontbox{width:144px;height:34px;margin-left:1.500px;margin-right:8px}
.fontbox .cv{margin:0 8px 0 9px}
.sizebox{width:80px;height:34px}
.sizebox .cv{padding-left:10px}

.work{flex:none;height:543px;display:flex;min-height:0}
.sheetcol{width:1252px;flex:none;display:flex;flex-direction:column}
.fbar{height:36px;flex:none;display:flex;align-items:center;padding:0 0 1px 1px}
.namebox{width:155px;height:33px;margin-right:7px}
.namebox .cv{padding-left:8px}
.fi{flex:none;display:flex;justify-content:center;align-items:center}
.fi1 svg{width:20px;height:20px}
.fi1{width:26px}
.sigma{width:26px;font-size:21px;color:#5b6063;line-height:1;font-family:"Liberation Serif",serif}
.eq{width:24px;height:7px;position:relative}
.eq::before{content:"";width:12px;height:7px;border-top:2px solid #4f8fd0;border-bottom:2px solid #4f8fd0;display:block}
.finput{margin-left:9px;width:977px;height:25px;flex:none;background:#2b3033;border:1px solid #25292b;border-radius:2px;padding-left:3px;font-size:14.400px;line-height:23px;color:#e1e4e6}
.fdrop{width:20px;height:25px;margin-left:2px;background:#2b3033;border:1px solid #1c1f21;border-radius:2px;display:flex;align-items:center;justify-content:center;flex:none}

.gridwrap{height:474px;flex:none;display:flex;overflow:hidden}
.grid{width:1240px;flex:none;background:#fff;overflow:hidden;color:#000;font-family:"Liberation Sans",sans-serif;font-size:13.333px}
.hdr{height:20px;display:flex}
.corner{width:40px;background:linear-gradient(#7b8184 0 10px,transparent 10px),linear-gradient(90deg,#7b8184 0 19px,#30363a 19px)}
.colA{flex:1;padding-left:802px;color:#fff;font-weight:700;font-size:13px;line-height:20px;background:linear-gradient(#7098c2 0 10px,#225f9f 10px)}
.row{height:17px;display:flex}
.row b{width:40px;flex:none;text-align:center;font-weight:400;color:#dbe0e3;line-height:17px;background:linear-gradient(90deg,#7b8184 0 19px,#30363a 19px);box-shadow:inset 0 -1px #a9adaf}
.row p{flex:1;margin:0;padding-left:2px;line-height:17px;white-space:nowrap;letter-spacing:-.09px;box-shadow:inset 0 -1px #c6c6c6}
.row u{text-decoration:underline wavy #e8141f 1px;text-underline-offset:2px}
.cur{position:relative}
.cur b{background:linear-gradient(90deg,#6a96c8 0 19px,#235f9f 19px);color:#fff;font-weight:700;box-shadow:none}
.cur p{box-shadow:none}
.cur::after{content:"";position:absolute;left:41px;right:0;top:-1px;bottom:-1px;border:2.500px solid #000;border-right:0}
.vscroll{flex:1;background:#2f3437;position:relative}
.vbtn{height:7px;margin:0 0 3px 3px;width:8px;position:relative}
.vbtn::before{content:"";position:absolute;left:0;top:3px;width:6px;height:1px;background:#111}
.vthumb{width:6px;height:34px;margin-left:3px;border-radius:3px;background:#9b9d9e}

.hscroll{height:12px;flex:none;background:#2f3437;display:flex;align-items:center;padding-left:4px;position:relative}
.hthumb{width:611px;height:6px;border-radius:3px;background:#9b9d9e}
.hbtn{position:absolute;left:1235px;top:0;width:5px;height:12px;background:#777b7d;border-left:2px solid #666;border-right:1px solid #777}
.tabs{flex:1;display:flex;align-items:center;padding-left:13px}
.nv{width:9px;height:12px;margin-right:10px;fill:#62676a;flex:none}
.plus{width:12px;height:12px;margin:0 10px 0 7px;fill:#f4f4f4;flex:none}
.tab{width:54px;height:21px;border:1px solid #85898b;border-top:0;color:#e1e4e6;font-weight:700;font-size:12px;line-height:19px;text-align:center}

.side{flex:1;margin-top:1px;height:540px;display:flex;border-top:2px solid #7a7f82;border-bottom:1px solid #7a7f82}
.strip{width:8px;flex:none;border-left:2px solid #7a7f82;border-right:1px solid #7a7f82;background:linear-gradient(#363a3d 0 232px,#7f8487 232px 305px,#363a3d 305px);position:relative}
.hand{position:absolute;left:0;top:263px;border-left:5px solid #202325;border-top:5px solid transparent;border-bottom:5px solid transparent}
.deck{flex:1;display:flex;flex-direction:column;align-items:center;padding-top:12px}
.sett{width:14px;height:12px}
.dline{width:22px;height:1px;background:#25282a;margin:12px 0 3px}
.di{width:31px;height:32px;flex:none;display:flex;align-items:center;justify-content:center;margin-bottom:3px;border:1px solid transparent;border-radius:3px}
.di svg{width:24px;height:24px;overflow:visible}
.di.on{border-color:#d8dadb;margin-bottom:5px}

.find{height:38px;flex:none;display:flex;align-items:center;font-size:14px}
.fx{width:16px;height:16px;margin:0 9px 0 9.500px;flex:none}
.findbox{width:249px;height:33px;margin-right:6px}
.ph{padding-left:9px;color:#7b8083;font-size:15px}
.farrow{width:20px;height:20px;margin-right:13px;flex:none}
.fall{width:51px;margin:0 0 3px -2px;font-size:12px;color:#72777a;white-space:nowrap}
.chk{width:16px;height:16px;border:1px solid #15181a;background:#2b3033;border-radius:3px;flex:none}
.lbl{color:#e1e4e6;margin:0 0 3px 7px;white-space:nowrap;font-size:14.700px;flex:none}
.l1{width:132px}
.l2{width:78px}
.spell{margin-left:10.500px}

.status{flex:1;display:flex;align-items:center;border-top:1px solid #6a6f72;font-size:12px;color:#d5d9db;padding-top:1px}
.st{height:18px;display:flex;align-items:center;border-right:1px solid #d8dadb;flex:none;white-space:nowrap}
.c1{width:160px;padding-left:10px}
.c2{width:288px}
.c3{width:141px;padding-left:8px}
.c4{width:171px;justify-content:center}
.c5{width:68px}
.c6{width:29px;justify-content:center}
.c7{width:29px;justify-content:center}
.c8{width:29px}
.c9{width:194px;justify-content:center}
.c10{width:142px;justify-content:center}
.c11{border:0;padding-left:8px;font-size:13px}
.ins{width:12px;height:7px;background:#25292b}
.sig{width:14px;height:14px}
.zm{width:8px;height:2px;background:#5d6265;margin-right:6px}
.zp{width:8px;height:8px;margin-left:6px;background:linear-gradient(#5d6265,#5d6265) center/8px 2px no-repeat,linear-gradient(#5d6265,#5d6265) center/2px 8px no-repeat}
.track{width:97px;height:2px;background:#7e8284;position:relative}
.knob{position:absolute;left:44px;top:-3px;width:8px;height:8px;border-radius:50%;background:#fff}
```
